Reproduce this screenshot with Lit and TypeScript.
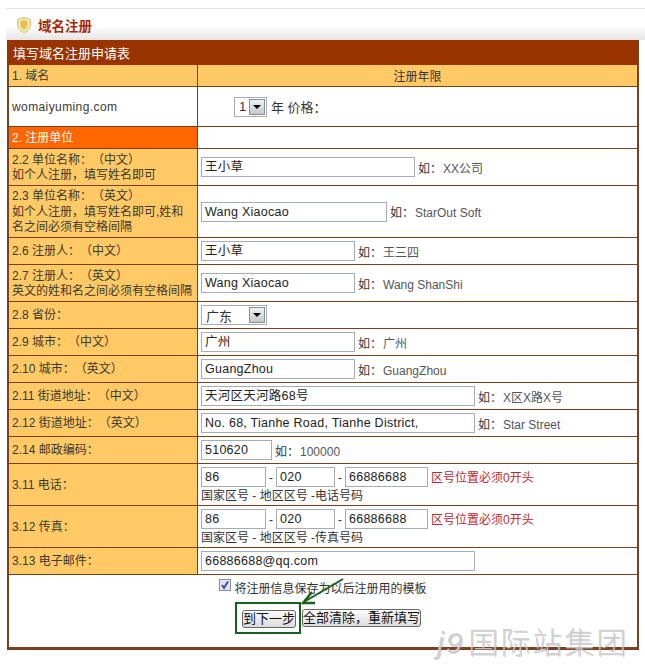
import { LitElement, html, css } from "lit";
import { customElement } from "lit/decorators.js";

type Row = { h: number; label: string[]; w?: number; val?: string; hint?: string; kind?: string; note?: string };

const rows: Row[] = [
  { h: 36, label: ["2.2 单位名称：（中文）", "如个人注册，填写姓名即可"], w: 214, val: "王小草", hint: "XX公司" },
  { h: 51, label: ["2.3 单位名称：（英文）", "如个人注册，填写姓名即可,姓和", "名之间必须有空格间隔"], w: 186, val: "Wang Xiaocao", hint: "StarOut Soft" },
  { h: 26, label: ["2.6 注册人：（中文）"], w: 154, val: "王小草", hint: "王三四" },
  { h: 36, label: ["2.7 注册人：（英文）", "英文的姓和名之间必须有空格间隔"], w: 154, val: "Wang Xiaocao", hint: "Wang ShanShi" },
  { h: 26, label: ["2.8 省份："], kind: "select" },
  { h: 26, label: ["2.9 城市：（中文）"], w: 154, val: "广州", hint: "广州" },
  { h: 26, label: ["2.10 城市：（英文）"], w: 154, val: "GuangZhou", hint: "GuangZhou" },
  { h: 26, label: ["2.11 街道地址：（中文）"], w: 274, val: "天河区天河路68号", hint: "X区X路X号" },
  { h: 26, label: ["2.12 街道地址：（英文）"], w: 274, val: "No. 68, Tianhe Road, Tianhe District,", hint: "Star Street" },
  { h: 26, label: ["2.14 邮政编码："], w: 71, val: "510620", hint: "100000" },
  { h: 41, label: ["3.11 电话："], kind: "phone", note: "国家区号 - 地区区号 -电话号码" },
  { h: 41, label: ["3.12 传真："], kind: "phone", note: "国家区号 - 地区区号 -传真号码" },
  { h: 26, label: ["3.13 电子邮件："], w: 274, val: "66886688@qq.com" },
];

@customElement("app-root")
export class AppRoot extends LitElement {
  static styles = css`
    :host {
      display: block;
      position: relative;
      width: 645px;
      height: 668px;
      overflow: hidden;
      background: #fff;
      font-family: "Liberation Sans", "Noto Sans CJK SC", sans-serif;
      font-size: 12px;
      color: #333;
      text-spacing-trim: space-all;
    }
    .page { padding: 8px 0 0 6px; }
    .title {
      height: 31px;
      border-top: 1px solid #e2e2e2;
      background: linear-gradient(#fff 0, #fff 55%, #e4e4e4 100%);
      display: flex;
      align-items: center;
      gap: 7px;
      padding-left: 11px;
      font-size: 13.5px;
      font-weight: 700;
      color: #a52a0a;
      font-family: "Noto Sans CJK SC", sans-serif;
    }
    .sheet {
      width: 632px;
      box-sizing: border-box;
      border: solid #7a4020;
      border-width: 0 2px 3px 2px;
      margin-left: 1px;
      background: #fff;
    }
    .caption {
      height: 25px;
      background: #993300;
      color: #fff;
      margin: 0 -1px 0 -2px;
      padding-left: 6px;
      font-size: 13px;
      line-height: 25px;
      font-family: "Noto Sans CJK SC", sans-serif;
    }
    .row {
      display: grid;
      grid-template-columns: 189px 1fr;
      border-bottom: 1px solid #7a3f1e;
      box-sizing: border-box;
    }
    .lab {
      box-sizing: border-box;
      background: #ffc966;
      border-right: 1px solid #7a3f1e;
      padding: 2px 0 0 3px;
      display: flex;
      flex-direction: column;
      justify-content: center;
      line-height: 15.5px;
      white-space: nowrap;
      color: #3a3a30;
    }
    .val {
      display: flex;
      align-items: center;
      padding-left: 3px;
      white-space: nowrap;
    }
    .heading .val { background: #ffc966; justify-content: center; padding: 0; }
    .orange .lab { background: #ff6600; color: #fff; }
    .plain .lab { background: #fff; letter-spacing: 0.4px; }
    .field {
      box-sizing: border-box;
      height: 20px;
      border: 1px solid #a5acb2;
      background: #fff;
      padding: 0 3px;
      line-height: 18px;
      font-size: 12.5px;
      letter-spacing: 0.25px;
      color: #222;
      overflow: hidden;
      flex: none;
    }
    .hint { margin-left: 3px; }
    .hint span { margin-left: 1px; color: #555; }
    .sel {
      box-sizing: border-box;
      height: 20px;
      display: flex;
      align-items: center;
      justify-content: space-between;
      border: 1px solid #a5acb2;
      background: #fff;
      padding: 0 1px 0 4px;
      font-size: 13px;
      flex: none;
    }
    .arrow {
      box-sizing: border-box;
      width: 16px;
      height: 16px;
      border: 1px solid #8a8f96;
      background: linear-gradient(#eef0f2, #c4c8cc);
      display: flex;
      align-items: center;
      justify-content: center;
    }
    .tri { width: 0; height: 0; border: 4px solid transparent; border-top: 4px solid #000; border-bottom: 0; }
    .stack { display: flex; flex-direction: column; padding-top: 1px; }
    .phone { display: flex; align-items: center; }
    .dash { width: 10px; text-align: center; padding-top: 2px; }
    .warn { color: #c0272d; margin-left: 3px; }
    .note { line-height: 16px; margin-top: 1px; }
    .year { margin-left: 33px; display: flex; align-items: center; gap: 4px; font-size: 13px; }
    .foot {
      height: 72px;
      display: flex;
      flex-direction: column;
      align-items: center;
      padding-top: 3px;
      box-sizing: border-box;
    }
    .check { display: flex; align-items: center; gap: 3px; height: 18px; }
    .box {
      width: 12px;
      height: 12px;
      box-sizing: border-box;
      border: 1px solid #8d8fa0;
      background: #dfe3ee;
      display: flex;
      margin-top: -4px;
    }
    .btns { display: flex; margin: 6px 0 0 10px; gap: 1px; align-items: center; }
    .ring { border: 2px solid #16601e; padding: 6px 3px 4px 5px; display: flex; height: 18px; align-items: center; }
    .btn {
      box-sizing: border-box;
      height: 18px;
      border: 1px solid #666;
      border-radius: 3px;
      background: linear-gradient(#fbfbfb, #dcdcdc);
      color: #111;
      font-size: 13px;
      line-height: 16px;
      white-space: nowrap;
    }
    .arrowmark { position: absolute; left: 296px; top: 576px; }
    .mark {
      position: absolute;
      left: 437px;
      top: 622px;
      font-size: 30px;
      line-height: 36px;
      letter-spacing: 2px;
      color: rgba(205, 205, 205, 0.9);
      text-shadow: 1px 1px 0 rgba(130, 130, 130, 0.35);
      font-family: "Noto Sans CJK SC", sans-serif;
      font-weight: 300;
      white-space: nowrap;
    }
    .mark i { font-family: "Liberation Sans", sans-serif; font-style: italic; margin-right: 4px; }
  `;

  private field(w: number, v: string) {
    return html`<div class="field" style="width:${w}px">${v}</div>`;
  }

  private value(r: Row) {
    if (r.kind === "select") {
      return html`<div class="sel" style="width:66px">广东<div class="arrow"><div class="tri"></div></div></div>`;
    }
    if (r.kind === "phone") {
      return html`<div class="stack">
        <div class="phone">
          ${this.field(65, "86")}<span class="dash">-</span>${this.field(59, "020")}<span class="dash">-</span>${this.field(83, "66886688")}
          <span class="warn">区号位置必须0开头</span>
        </div>
        <div class="note">${r.note}</div>
      </div>`;
    }
    return html`${this.field(r.w!, r.val!)}${r.hint ? html`<div class="hint">如：<span>${r.hint}</span></div>` : ""}`;
  }

  render() {
    return html`
      <div class="page">
        <div class="title">
          <svg width="14" height="16" viewBox="0 0 14 16">
            <path d="M7 .5 L13.5 2.5 V8 C13.5 12 10 14.5 7 15.5 C4 14.5 .5 12 .5 8 V2.5 Z" fill="#f6e9ae" stroke="#cdbd80" />
            <path d="M7 3 L10.5 4.3 V8 C10.5 10.5 8.7 12 7 12.8 C5.3 12 3.5 10.5 3.5 8 V4.3 Z" fill="#e8bf50" />
          </svg>
          域名注册
        </div>
        <div class="sheet">
          <div class="caption">填写域名注册申请表</div>
          <div class="row heading" style="height:22px">
            <div class="lab">1. 域名</div>
            <div class="val">注册年限</div>
          </div>
          <div class="row plain" style="height:40px">
            <div class="lab">womaiyuming.com</div>
            <div class="val">
              <div class="year">
                <div class="sel" style="width:33px">1<div class="arrow"><div class="tri"></div></div></div>
                年 价格：
              </div>
            </div>
          </div>
          <div class="row orange" style="height:22px">
            <div class="lab">2. 注册单位</div>
            <div class="val"></div>
          </div>
          ${rows.map(
            (r) => html`<div class="row" style="height:${r.h + 1}px">
              <div class="lab">${r.label.map((l) => html`<div>${l}</div>`)}</div>
              <div class="val">${this.value(r)}</div>
            </div>`
          )}
          <div class="foot">
            <div class="check">
              <span class="box">
                <svg width="10" height="10" viewBox="0 0 10 10"><path d="M2 5 L4 8 L8 1.5" fill="none" stroke="#3b4fa8" stroke-width="2" /></svg>
              </span>
              将注册信息保存为以后注册用的模板
            </div>
            <div class="btns">
              <div class="ring"><div class="btn">到下一步</div></div>
              <div class="btn">全部清除，重新填写</div>
            </div>
          </div>
        </div>
      </div>
      <svg class="arrowmark" width="50" height="34" viewBox="0 0 50 34">
        <path d="M47 3 L7 26.5" stroke="#16601e" stroke-width="2" fill="none" />
        <path d="M16 16 L7 27 L19 27" stroke="#16601e" stroke-width="2.4" fill="none" />
      </svg>
      <div class="mark"><i>j9</i>国际站集团</div>
    `;
  }
}
